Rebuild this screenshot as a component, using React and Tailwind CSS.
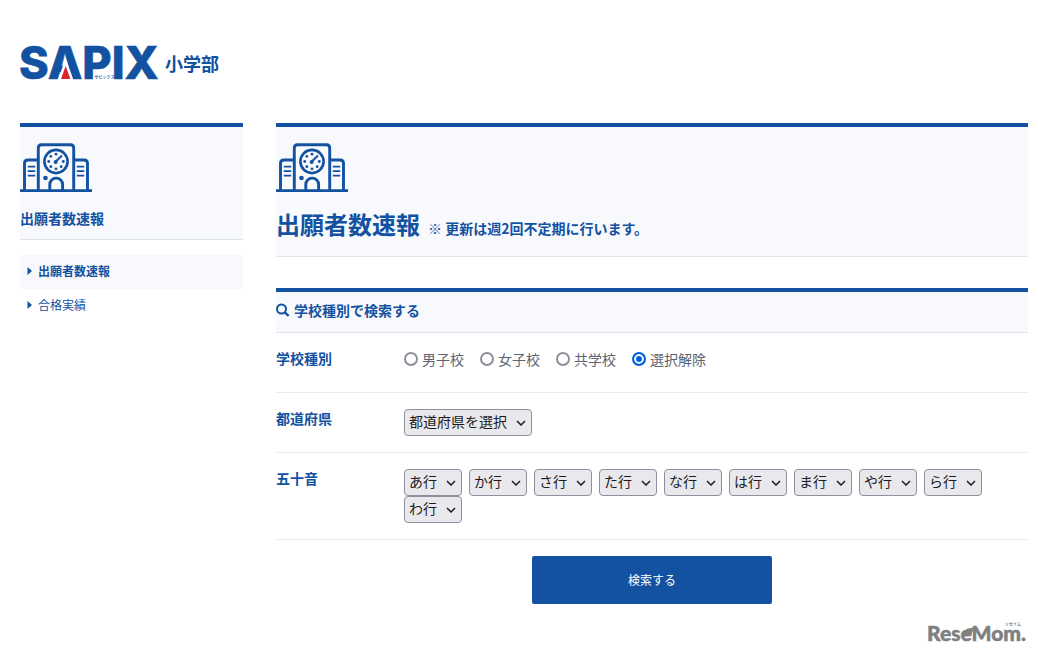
import { useId } from "react";

const KANA_ROWS = [
  ["あ行", "あいうえお"],
  ["か行", "かきくけこ"],
  ["さ行", "さしすせそ"],
  ["た行", "たちつてと"],
  ["な行", "なにぬねの"],
  ["は行", "はひふへほ"],
  ["ま行", "まみむめも"],
  ["や行", "やゆよ"],
  ["ら行", "らりるれろ"],
  ["わ行", "わ"],
];

const SCHOOL_TYPES = ["男子校", "女子校", "共学校", "選択解除"];

function SapixLogo() {
  return (
    <a href="#top" className="flex items-center gap-1 text-[#1352a1]">
      <svg className="h-9 w-[141px] overflow-visible" viewBox="0 0 141 36" role="img" aria-label="SAPIX">
        <text
          x="-1"
          y="34"
          fontFamily="Inter, sans-serif"
          fontWeight="800"
          fontSize="45"
          fill="#1352a1"
          stroke="#1352a1"
          strokeWidth="0.600"
        >
          SAPIX
        </text>
        <path d="M45.700 13 L38 35 H53.400 Z" fill="#fff" />
        <path d="M45.700 21 L41 34 H50.400 Z" fill="#d9232e" />
        <text x="74.500" y="34" fontFamily="'Noto Sans CJK JP', sans-serif" fontWeight="500" fontSize="4" fill="#1352a1">
          サピックス
        </text>
      </svg>
      <span className="text-lg leading-8 font-bold">小学部</span>
    </a>
  );
}

function SchoolIcon() {
  return (
    <svg
      className="h-[50px] w-[72px]"
      viewBox="0 0 72 50"
      fill="none"
      stroke="#1352a1"
      strokeWidth="2.900"
      aria-hidden="true"
    >
      <path d="M0 47.600 H72" />
      <path d="M18.300 47 V5 Q18.300 1.700 21.600 1.700 H50.400 Q53.700 1.700 53.700 5 V47" />
      <path d="M4.500 47 V20.500 Q4.500 17 8 17 H18" />
      <path d="M67.500 47 V20.500 Q67.500 17 64 17 H54" />
      <path d="M29.800 47 V41.500 A6.400 6.400 0 0 1 42.600 41.500 V47" />
      <circle cx="36" cy="18.500" r="11.600" strokeWidth="2.600" />
      <path
        d="M7.800 23.700 H15.200 M7.800 28.200 H15.200 M7.800 32.700 H15.200 M56.800 23.700 H64.200 M56.800 28.200 H64.200 M56.800 32.700 H64.200"
        strokeWidth="1.700"
      />
      <path d="M42 12.500 L35.500 18.800" strokeWidth="2" />
      <g fill="#1352a1" stroke="none">
        <circle cx="25.500" cy="35" r="2.300" />
        <circle cx="35.700" cy="19" r="2" />
        <circle cx="36" cy="11.200" r="1.400" />
        <circle cx="30.800" cy="13.300" r="1.400" />
        <circle cx="28.700" cy="18.500" r="1.400" />
        <circle cx="30.800" cy="23.700" r="1.400" />
        <circle cx="36" cy="25.800" r="1.400" />
        <circle cx="41.200" cy="23.700" r="1.400" />
        <circle cx="43.300" cy="18.500" r="1.400" />
      </g>
    </svg>
  );
}

function SearchIcon() {
  return (
    <svg className="size-[14px]" viewBox="0 0 14 14" fill="none" stroke="#1352a1" strokeWidth="2" aria-hidden="true">
      <circle cx="5.500" cy="6" r="4.500" />
      <path d="M8.800 9.300 L12.600 13" strokeWidth="2.400" />
    </svg>
  );
}

function SideLink({ children, active }) {
  return (
    <li className={active ? "bg-[#f7f9fc]" : ""}>
      <a
        href="#list"
        aria-current={active ? "page" : undefined}
        className={
          active
            ? "flex items-center gap-1.5 px-[7px] pt-[7px] pb-[9px] text-xs leading-[18px] font-bold"
            : "flex items-center gap-1.5 px-[7px] pt-[7px] pb-[9px] text-xs leading-[18px]"
        }
      >
        <svg className="h-2 w-[5px]" viewBox="0 0 5 8" fill="#1352a1" aria-hidden="true">
          <path d="M0.500 0 L5 4 L0.500 8 Z" />
        </svg>
        {children}
      </a>
    </li>
  );
}

function Select({ label, options, className }) {
  return (
    <span className="relative inline-flex">
      <select
        aria-label={label}
        className={`h-[27px] appearance-none rounded-[4px] border border-[#8f8f9d] bg-[#e9e9ed] pb-[3px] pl-1 text-sm text-[#1c1b22] ${className}`}
      >
        <option>{label}</option>
        {options.map((o) => (
          <option key={o}>{o}</option>
        ))}
      </select>
      <svg
        className="pointer-events-none absolute top-[11px] right-[6px] h-[6px] w-[10px]"
        viewBox="0 0 10 6"
        fill="none"
        stroke="#1c1b22"
        strokeWidth="1.500"
        aria-hidden="true"
      >
        <path d="M1 1 L5 5 L9 1" />
      </svg>
    </span>
  );
}

function Radio({ label, checked }) {
  const id = useId();
  return (
    <span className="flex items-center gap-1">
      <input
        id={id}
        type="radio"
        name="school-type"
        defaultChecked={checked}
        className="size-[14px] appearance-none rounded-full border-2 border-[#8f8f9d] bg-white checked:border-[#0060df] checked:bg-[#0060df] checked:shadow-[inset_0_0_0_2px_white]"
      />
      <label htmlFor={id}>{label}</label>
    </span>
  );
}

function Row({ title, children }) {
  return (
    <div className="flex border-b border-[#e9ebef] py-4">
      <div className="w-32 shrink-0 text-sm leading-[18px] font-bold text-[#1352a1]">{title}</div>
      <div className="flex min-h-[27px] min-w-0 flex-1 items-start">{children}</div>
    </div>
  );
}

function ReseMomLogo() {
  return (
    <svg className="h-6 w-[101px] overflow-visible" viewBox="0 0 101 24" role="img" aria-label="ReseMom">
      <text
        x="0"
        y="20"
        fontFamily="Lato, sans-serif"
        fontWeight="900"
        fontSize="21"
        fill="#808080"
        stroke="#808080"
        strokeWidth="0.500"
      >
        ReseMom.
      </text>
      <path d="M35 15 Q35 8 46 6.500 Q46.500 14 40 15.500 Z" fill="#808080" />
      <text x="78" y="5" fontFamily="'Noto Sans CJK JP', sans-serif" fontSize="4" fontWeight="700" fill="#808080">
        リセイム
      </text>
    </svg>
  );
}

export default function App() {
  return (
    <div className="bg-white pt-[45px] pr-[10px] pl-5 font-['Noto_Sans_CJK_JP',sans-serif] text-[#1352a1]">
      <header className="mb-[42px] flex h-9">
        <SapixLogo />
      </header>
      <div className="flex items-start gap-[33px]">
        <aside className="w-[223px] shrink-0">
          <div className="border-t-4 border-b border-t-[#1352a1] border-b-[#dfe3ea] bg-[#f7f9fc] pt-4 pb-[11px]">
            <SchoolIcon />
            <h2 className="mt-[15px] text-sm leading-5 font-bold">出願者数速報</h2>
          </div>
          <nav className="mt-[15px]">
            <ul>
              <SideLink active>出願者数速報</SideLink>
              <SideLink>合格実績</SideLink>
            </ul>
          </nav>
        </aside>
        <main className="min-w-0 flex-1">
          <div className="border-t-4 border-b border-t-[#1352a1] border-b-[#dfe3ea] bg-[#f7f9fc] pt-4 pb-3">
            <SchoolIcon />
            <h1 className="mt-[11px] flex items-baseline gap-2 text-2xl leading-10 font-bold">
              出願者数速報
              <small className="text-sm font-bold">※ 更新は週2回不定期に行います。</small>
            </h1>
          </div>
          <form className="mt-[31px]" onSubmit={(e) => e.preventDefault()}>
            <h2 className="flex items-center gap-1 border-t-4 border-b border-t-[#1352a1] border-b-[#dfe3ea] bg-[#f7f9fc] pt-2 pb-3 text-sm leading-5 font-bold">
              <SearchIcon />
              学校種別で検索する
            </h2>
            <Row title="学校種別">
              <div className="flex flex-wrap gap-x-4 text-sm leading-5 text-[#5b6470]">
                {SCHOOL_TYPES.map((t) => (
                  <Radio key={t} label={t} checked={t === "選択解除"} />
                ))}
              </div>
            </Row>
            <Row title="都道府県">
              <Select label="都道府県を選択" options={["東京都", "神奈川県", "千葉県", "埼玉県"]} className="w-32" />
            </Row>
            <Row title="五十音">
              <div className="flex flex-wrap gap-x-[7px]">
                {KANA_ROWS.map(([label, kana]) => (
                  <Select key={label} label={label} options={[...kana]} className="w-[58px]" />
                ))}
              </div>
            </Row>
            <div className="mt-4 flex justify-center">
              <button type="submit" className="h-12 w-60 rounded-[2px] bg-[#1352a1] text-xs text-white">
                検索する
              </button>
            </div>
          </form>
        </main>
      </div>
      <footer className="mt-[17px] flex justify-end">
        <ReseMomLogo />
      </footer>
    </div>
  );
}
